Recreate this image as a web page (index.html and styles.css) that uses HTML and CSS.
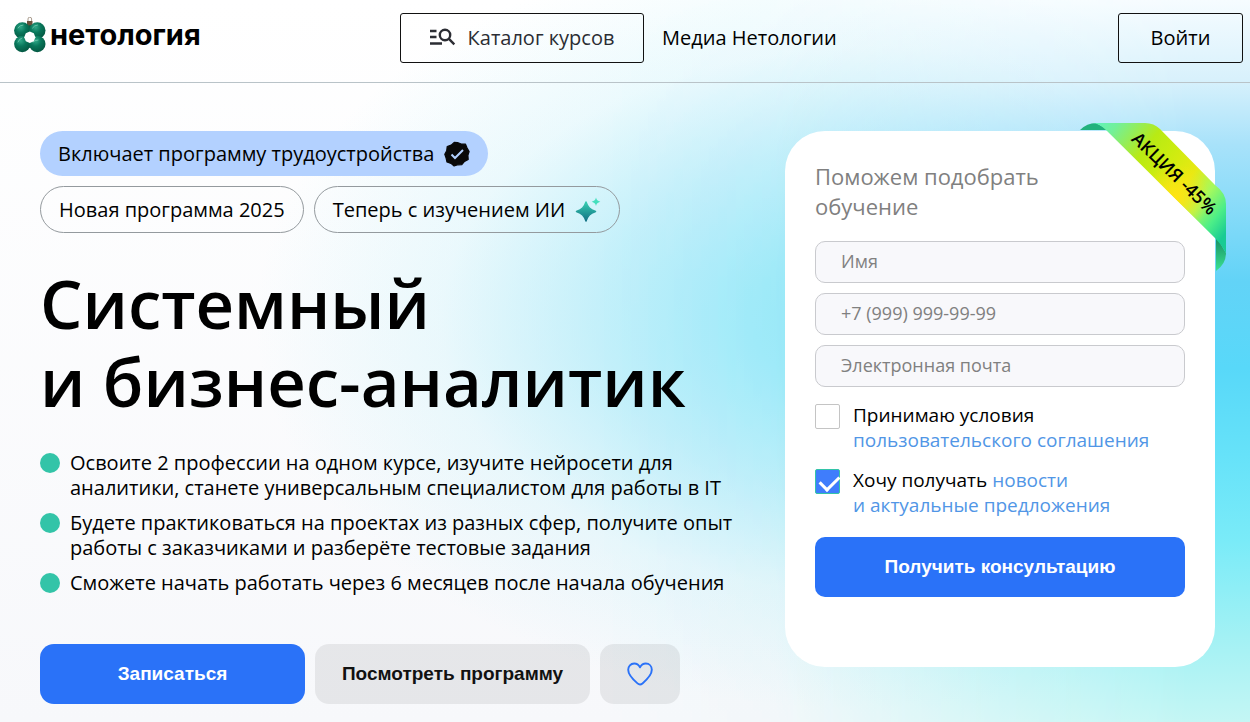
FILE: index.html
```html
<!DOCTYPE html>
<html lang="ru">
<head>
<meta charset="utf-8">
<meta name="viewport" content="width=device-width, initial-scale=1">
<title>Системный и бизнес-аналитик — Нетология</title>
<link rel="stylesheet" href="styles.css">
</head>
<body class="page">
<header class="header">
  <a class="logo" href="#">
    <svg class="logo-mark" viewBox="0 0 32 36" aria-hidden="true">
      <defs>
        <radialGradient id="ball" cx=".4" cy=".3" r=".75">
          <stop offset="0" stop-color="#2fa888"/><stop offset=".45" stop-color="#08765a"/><stop offset="1" stop-color="#045540"/>
        </radialGradient>
      </defs>
      <path d="M14 4V2a1.800 1.800 0 0 1 3.600 0v2" fill="none" stroke="#a89a8c"/>
      <path d="M13 4h5.500v5H13z" fill="#6b4f3a"/>
      <path d="M16 8l9 5v14l-9 4-9-4V13z" fill="#066048"/>
      <circle cx="8.300" cy="13.500" r="8.200" fill="url(#ball)"/>
      <circle cx="23.300" cy="13.500" r="8.200" fill="url(#ball)"/>
      <circle cx="8.300" cy="27" r="8.200" fill="url(#ball)"/>
      <circle cx="23.300" cy="27" r="8.200" fill="url(#ball)"/>
      <path d="M4 11q2-3 5-3M18.500 11q2-3 5-3M4 25q1-3 4-4M19 25q2-2 5-2" fill="none" stroke="#8fdcc4" stroke-linecap="round" opacity=".6"/>
      <path d="M15.800 14.500l4 1.800 1.600 4-1.600 4-4 1.800-4-1.800-1.600-4 1.600-4z" fill="#fff"/>
    </svg>
    <span class="logo-text">нетология</span>
  </a>
  <nav class="nav">
    <button class="btn-outline btn-catalog" type="button">
      <svg class="icon-catalog" viewBox="0 0 26 18" fill="none" stroke="currentColor" stroke-width="2.400" aria-hidden="true">
        <path d="M0 3h6.500M0 9h6.500M0 15.500h12"/><circle cx="15" cy="7" r="5.200"/><path d="M18.700 10.700l5.600 5.600"/>
      </svg>
      Каталог курсов
    </button>
    <a class="nav-link" href="#">Медиа Нетологии</a>
  </nav>
  <button class="btn-outline btn-login" type="button">Войти</button>
</header>
<main class="hero">
  <section class="intro">
    <div class="chips">
      <div class="chip chip-filled">Включает программу трудоустройства
        <svg class="icon-badge" viewBox="0 0 26 26" aria-hidden="true">
          <path d="M13.500 1.500l3.700 1.500 4.300.2 1.600 3.900 2 3.400-1.200 3.800.3 4.200-3.700 1.900-2.700 3.200-4 .2-3.700 1.200-3.100-2.600-4-1.400-.9-4L.8 13.300l1.900-3.600.5-4.200 4-1.400 3-2.700z" fill="#090909" stroke="#090909" stroke-width="1.200" stroke-linejoin="round"/>
          <path d="M7.500 13.500l3.500 3.500 8-8" fill="none" stroke="#b3d1ff" stroke-width="2"/>
        </svg>
      </div>
      <div class="chip">Новая программа 2025</div>
      <div class="chip">Теперь с изучением ИИ
        <svg class="icon-spark" viewBox="0 0 26 26" aria-hidden="true">
          <defs><linearGradient id="spark" x1="0" y1="0" x2="0" y2="1"><stop offset="0" stop-color="#36cdb0"/><stop offset="1" stop-color="#127184"/></linearGradient></defs>
          <path d="M11 5c1.800 5.500 4 7.500 9.500 9.500C15 16.500 12.800 18.500 11 24c-1.800-5.500-4-7.500-9.500-9.500C7 12.500 9.200 10.500 11 5z" fill="url(#spark)" stroke="url(#spark)" stroke-width="1.500" stroke-linejoin="round"/>
          <path d="M21 .5c.7 2.600 1.500 3.400 4.300 4.200-2.800.8-3.600 1.600-4.300 4.200-.7-2.600-1.500-3.400-4.300-4.200C19.500 3.900 20.300 3.100 21 .5z" fill="#44dfbd"/>
        </svg>
      </div>
    </div>
    <h1 class="title">Системный<br>и бизнес-аналитик</h1>
    <ul class="benefits">
      <li class="benefit">Освоите 2 профессии на одном курсе, изучите нейросети для<br>аналитики, станете универсальным специалистом для работы в IT</li>
      <li class="benefit">Будете практиковаться на проектах из разных сфер, получите опыт<br>работы с заказчиками и разберёте тестовые задания</li>
      <li class="benefit">Сможете начать работать через 6 месяцев после начала обучения</li>
    </ul>
    <div class="actions">
      <button class="btn btn-primary btn-enroll" type="button">Записаться</button>
      <button class="btn btn-muted btn-program" type="button">Посмотреть программу</button>
      <button class="btn btn-muted btn-like" type="button" aria-label="В избранное">
        <svg class="icon-heart" viewBox="0 0 26 24" fill="none" stroke="#2a72f8" stroke-width="1.900" aria-hidden="true">
          <path d="M13 5.300C11.500 2.500 9.500 1.500 7.200 1.500 3.700 1.500 1.200 4.200 1.200 7.800c0 5.300 4.600 9.600 9.300 13.600 1.800 1.500 3.200 1.500 5 0 4.700-4 9.300-8.300 9.300-13.600 0-3.600-2.500-6.300-6-6.300-2.300 0-4.300 1-5.800 3.800z" stroke-linejoin="round"/>
        </svg>
      </button>
    </div>
  </section>
  <form class="card">
    <svg class="ribbon" viewBox="0 0 150 150" aria-hidden="true">
      <defs>
        <linearGradient id="band" gradientUnits="userSpaceOnUse" x1="20" y1="-10" x2="158" y2="98">
          <stop offset="0" stop-color="#5cf5c4"/><stop offset=".13" stop-color="#72f09a"/><stop offset=".34" stop-color="#b8ea14"/><stop offset=".46" stop-color="#c9ec10"/><stop offset=".64" stop-color="#e8e912"/><stop offset=".78" stop-color="#a5f95e"/><stop offset=".9" stop-color="#4cee88"/><stop offset="1" stop-color="#18cb94"/>
        </linearGradient>
        <radialGradient id="glow" gradientUnits="userSpaceOnUse" cx="98" cy="76" r="34"><stop offset="0" stop-color="#ffe414"/><stop offset="1" stop-color="#ffe414" stop-opacity="0"/></radialGradient>
        <linearGradient id="fold" x1="0" y1="0" x2="0" y2="1"><stop offset="0" stop-color="#168a62"/><stop offset="1" stop-color="#3be292"/></linearGradient>
      </defs>
      <path d="M2 8Q9 1 18 1l13 7z" fill="#22b27c"/>
      <path d="M138 114l10 17q0 11-10 18z" fill="url(#fold)"/>
      <path d="M15 1h52q9 0 15 6l55 56q11 8 11 19v49q-4-8-11-15L28 8q-6-6-13-7z" fill="url(#band)"/>
      <path d="M15 1h52q9 0 15 6l55 56q11 8 11 19v49q-4-8-11-15L28 8q-6-6-13-7z" fill="url(#glow)"/>
      <text class="ribbon-text" x="92" y="56" text-anchor="middle" transform="rotate(44 92 56)">АКЦИЯ -45%</text>
    </svg>
    <h2 class="card-title">Поможем подобрать обучение</h2>
    <div class="fields">
      <input class="field" type="text" placeholder="Имя" aria-label="Имя">
      <input class="field" type="tel" placeholder="+7 (999) 999-99-99" aria-label="Телефон">
      <input class="field" type="email" placeholder="Электронная почта" aria-label="Электронная почта">
    </div>
    <div class="consents">
      <div class="consent">
        <input class="check" type="checkbox" id="terms">
        <label for="terms">Принимаю условия<br><a class="link" href="#">пользовательского соглашения</a></label>
      </div>
      <div class="consent">
        <input class="check" type="checkbox" id="news" checked>
        <label for="news">Хочу получать <a class="link" href="#">новости<br>и актуальные предложения</a></label>
      </div>
    </div>
    <button class="btn btn-primary btn-submit" type="submit">Получить консультацию</button>
  </form>
</main>
</body>
</html>
```
FILE: styles.css
```css
* {
  box-sizing: border-box;
}

.page {
  position: relative;
  z-index: 0;
  margin: 0;
  min-height: 100vh;
  font-family: "Open Sans", "Noto Sans", sans-serif;
  font-size: 20px;
  line-height: 25px;
  color: #000;
  background:
    radial-gradient(ellipse 620px 390px at 70% 320px, #98e8f8 0%, #a5ecf9 20%, rgba(160, 232, 248, 0.6) 45%, rgba(170, 235, 248, 0.22) 70%, rgba(190, 240, 250, 0) 100%),
    linear-gradient(#fff, #f7f8fb);
}

/* Blue column of light behind the form */
.page::before {
  content: "";
  position: absolute;
  inset: 0;
  z-index: -1;
  background: linear-gradient(#f6fcff 0, #d8f1fc 11%, #a8e2fa 20%, #62d3f7 39%, #58d8f9 51%, #66e2f9 63%, #7aebf8 75%, #a2f1f4 88%, #c4f6f4 100%);
  mask-image: linear-gradient(90deg, transparent 48%, rgba(0, 0, 0, 0.08) 62%, rgba(0, 0, 0, 0.65) 80%, #000 95%);
}

.header {
  display: grid;
  grid-template-columns: 386px 1fr auto;
  align-items: start;
  min-height: 83px;
  padding: 13px 7px 0 14px;
  border-bottom: 1px solid #b9c3c8;
}

.logo {
  display: flex;
  align-items: center;
  gap: 4px;
  padding-top: 4px;
  color: #000;
  text-decoration: none;
}

.logo-mark {
  width: 32px;
  height: 36px;
}

.logo-text {
  font-family: Inter, sans-serif;
  font-size: 29px;
  font-weight: 700;
  line-height: 36px;
}

.nav {
  display: flex;
  align-items: center;
  gap: 18px;
}

.btn-outline {
  display: flex;
  align-items: center;
  justify-content: center;
  height: 50px;
  padding: 0 0 2px;
  border: 1px solid #111;
  border-radius: 3px;
  background: none;
  font: inherit;
}

.btn-catalog {
  gap: 12px;
  width: 244px;
  color: #2b2d33;
}

.icon-catalog {
  width: 26px;
  height: 18px;
}

.btn-login {
  width: 125px;
  font-weight: 500;
}

.nav-link {
  padding-bottom: 2px;
  color: #000;
  font-weight: 500;
  text-decoration: none;
}

.hero {
  display: grid;
  grid-template-columns: minmax(0, 1fr) 430px;
  align-items: start;
  gap: 30px;
  padding: 48px 35px 18px 40px;
}

.chips {
  display: flex;
  flex-wrap: wrap;
  gap: 10px;
  max-width: 600px;
}

.chip {
  display: flex;
  align-items: center;
  gap: 10px;
  height: 47px;
  padding: 0 18px;
  border: 1px solid #949a9e;
  border-radius: 24px;
}

.chip-filled {
  height: 45px;
  border: 0;
  background: #b3d1ff;
}

.icon-badge,
.icon-spark {
  width: 26px;
  height: 26px;
}

.title {
  margin: 31px 0 30px;
  font-size: 67px;
  font-weight: 600;
  line-height: 78px;
}

.benefits {
  display: grid;
  gap: 10px;
  margin: 0 0 49px;
  padding: 0;
  list-style: none;
}

.benefit {
  position: relative;
  padding-left: 30px;
}

.benefit::before {
  content: "";
  position: absolute;
  top: 3px;
  left: 0;
  width: 20px;
  height: 20px;
  border-radius: 50%;
  background: #33c4a8;
}

.actions {
  display: flex;
  gap: 10px;
}

.btn {
  display: flex;
  align-items: center;
  justify-content: center;
  height: 60px;
  padding: 0;
  border: 0;
  font-family: "Liberation Sans", Arial, sans-serif;
  font-size: 19px;
  font-weight: 700;
}

.btn-primary {
  background: #2a72f8;
  color: #fff;
}

.btn-muted {
  background: rgba(0, 0, 0, 0.07);
  color: #111;
}

.btn-enroll,
.btn-program,
.btn-like {
  border-radius: 14px;
}

.btn-enroll {
  width: 265px;
}

.btn-program {
  width: 275px;
}

.btn-like {
  width: 80px;
}

.icon-heart {
  width: 26px;
  height: 24px;
}

.card {
  position: relative;
  padding: 30px 30px 70px;
  border-radius: 40px;
  background: #fff;
  font-size: 19px;
}

.ribbon {
  position: absolute;
  top: -9px;
  right: -13px;
  width: 150px;
  height: 150px;
}

.ribbon-text {
  font-size: 18px;
  font-weight: 600;
}

.card-title {
  max-width: 280px;
  margin: 0 0 20px;
  font-size: 22px;
  font-weight: 400;
  line-height: 30px;
  color: #808080;
}

.fields {
  display: grid;
  gap: 10px;
}

.field {
  width: 100%;
  height: 42px;
  padding: 0 25px 3px;
  border: 1px solid #c9cace;
  border-radius: 10px;
  background: #f8f8fb;
  font: inherit;
  font-size: 18px;
}

.field::placeholder {
  color: #808080;
}

.consents {
  display: grid;
  gap: 15px;
  margin: 16px 0 19px;
}

.consent {
  display: grid;
  grid-template-columns: 25px 1fr;
  gap: 13px;
}

.check {
  position: relative;
  appearance: none;
  width: 25px;
  height: 25px;
  margin: 1px 0 0;
  border: 1px solid #c4c4c4;
  border-radius: 2px;
  background: #fff;
}

.check:checked {
  border-color: #33c4a8;
  background: #3f7dfc;
}

.check:checked::after {
  content: "";
  position: absolute;
  top: 5px;
  left: 4px;
  width: 16px;
  height: 9px;
  border: solid #fff;
  border-width: 0 0 3px 3px;
  transform: rotate(-45deg);
}

.link {
  color: #5196e6;
  text-decoration: none;
}

.btn-submit {
  width: 100%;
  border-radius: 10px;
}
```
